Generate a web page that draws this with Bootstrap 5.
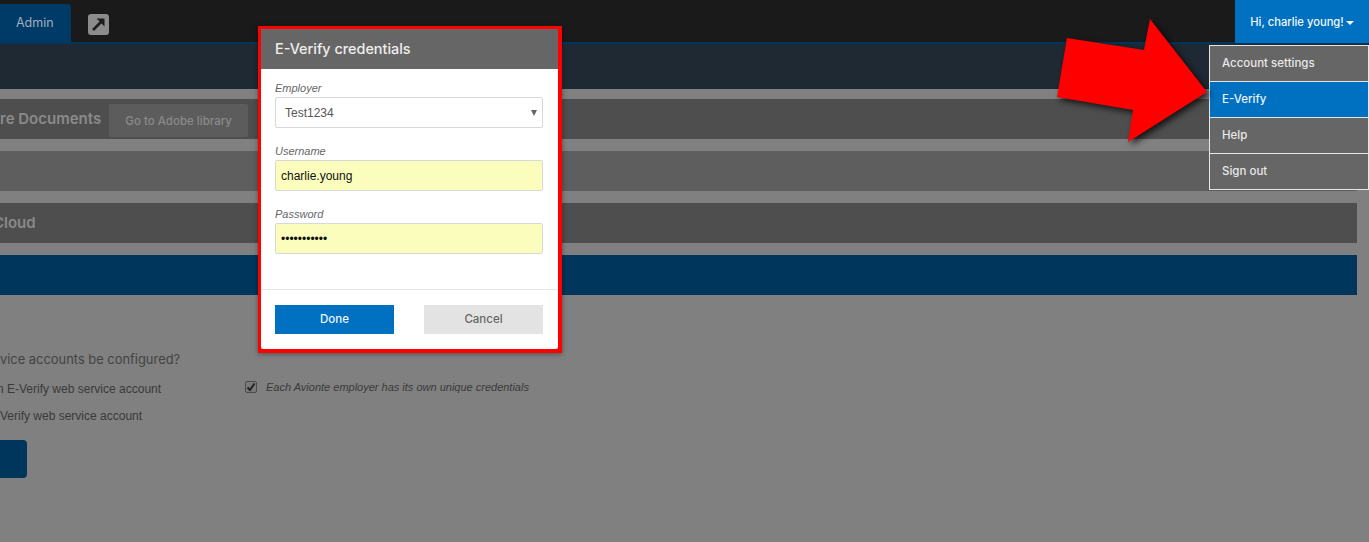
<!DOCTYPE html>
<html lang="en">
<head>
<meta charset="utf-8">
<title>E-Verify credentials</title>
<link rel="stylesheet" href="https://cdn.jsdelivr.net/npm/bootstrap@5.3.0/dist/css/bootstrap.min.css">
<style>
html,body{height:100%}
body{background:#808080;overflow:hidden;font-family:Inter,"Noto Sans",sans-serif;color:#3f3f3f;position:relative}
.topbar{height:44px;background:#1a1a1a;border-bottom:2px solid #00355c;padding-top:4px}
.tab-admin{width:71px;height:38px;background:#003a66;color:#9fb0bf;border-top-right-radius:4px;font-size:12.5px;padding-left:16px;padding-top:1px}
.ext-icon{width:21px;height:21px;margin-left:17px;margin-top:10px;background:#8c8c8c;border-radius:3px}
.subbar{height:45px;background:#1f2933}
.rows{padding:10px 12px 0 0;gap:12px}
.band{height:40px;font-weight:600;font-size:15px;color:#8a8a8a}
.band-dark{background:#4e4e4e}
.band-mid{background:#5e5e5e}
.band-blue{background:#00355c}
.doc-title{line-height:20px;margin-top:10px}
.cloud-title{margin-left:-7px}
.adobe-btn{width:139px;height:33px;margin-left:8px;margin-top:5px;padding-top:3px;background:#5c5c5c;color:#8a8a8a;border-radius:2px;font-size:11.5px;font-weight:500}
.config{padding-top:56px}
.q-text{font-size:12.9px;line-height:18px;color:#444;margin-bottom:11px}
.opt-text{font-family:"Liberation Sans",sans-serif;font-size:12px;line-height:18px;color:#3a3a3a}
.opt-first{margin-left:-3px;flex:0 0 248px}
.opt-second{margin-top:9px}
.chk-wrap{gap:9px;margin-top:-4px}
.chk{width:12px;height:12px;background:#7a7a7a;border:1px solid #4c4c4c;border-radius:2px}
.chk-label{font-family:"Liberation Sans",sans-serif;font-style:italic;font-size:11px;color:#3a3a3a}
.save-btn{width:27px;height:38px;margin-top:15px;background:#00355c;border-radius:0 4px 4px 0}
.user-btn{position:absolute;left:1235px;top:0;width:134px;height:43px;background:#0070c0;color:#f2f7fb;font-size:11.2px;font-weight:500;padding-top:2px}
.caret-down{border-top:4px solid #fff;border-left:4px solid transparent;border-right:4px solid transparent;margin-left:2px}
.user-menu{position:absolute;left:1209px;top:45px;width:160px;border:1px solid #e6e6e6}
.user-item{height:36px;padding:1px 0 0 12px;background:#666;color:#e8e8e8;font-size:11.5px;font-weight:500;border-bottom:1px solid #e6e6e6}
.user-item:last-child{border-bottom:0;height:35px}
.user-item.on{background:#0070c0;color:#e8f2fa}
.red-arrow{position:absolute;left:1050px;top:12px;filter:drop-shadow(3px 3px 3px rgba(0,0,0,.75))}
.cred-frame{position:absolute;left:258px;top:26px;width:304px;height:327px;border:3px solid #f00;border-right-width:4px;border-bottom-width:4px;box-shadow:0 1px 5px rgba(0,0,0,.4)}
.cred-box{height:100%;background:#fff;border-radius:0 0 3px 3px}
.cred-head{height:40px;background:#666;color:#eee;font-size:14.4px;font-weight:500;padding:0 0 1px 14px}
.cred-body{padding:12px 15px 0 14px;height:221px;border-bottom:1px solid #e5e5e5}
.cred-label{font-family:"Liberation Sans",sans-serif;font-style:italic;font-size:11px;line-height:14px;color:#666;margin:0 0 2px;display:block}
.cred-input{height:31px;width:268px;border:1px solid #d8d8d8;border-radius:2px;margin-bottom:16px;font-family:"Liberation Sans",sans-serif;font-size:12px;color:#111;background:#fbfdbd;padding:0 5px;display:flex;align-items:center}
.cred-select{background:#fff;color:#555;padding:0 5px 0 9px;justify-content:space-between}
.sel-caret{border-top:6px solid #666;border-left:3px solid transparent;border-right:3px solid transparent}
.cred-foot{padding:15px 15px 0 14px}
.cred-btn{width:119px;height:29px;font-size:11.5px;font-weight:500}
.cred-done{background:#0070c0;color:#eef6fc}
.cred-cancel{background:#e3e3e3;color:#666}
</style>
</head>
<body>
<nav class="topbar d-flex align-items-start">
  <div class="tab-admin d-flex align-items-center">Admin</div>
  <div class="ext-icon d-flex align-items-center justify-content-center">
    <svg width="17" height="17" viewBox="0 0 17 17"><path d="M3 14 L12 5" stroke="#1e1e1e" stroke-width="2.6" fill="none"/><path d="M6.5 2.5 H14.5 V10.5 Z" fill="#1e1e1e"/></svg>
  </div>
</nav>
<div class="subbar"></div>
<main class="rows d-flex flex-column">
  <div class="band band-dark d-flex align-items-start"><span class="doc-title">re Documents</span><div class="adobe-btn d-flex align-items-center justify-content-center">Go to Adobe library</div></div>
  <div class="band band-mid"></div>
  <div class="band band-dark d-flex align-items-center"><span class="cloud-title">Cloud</span></div>
  <div class="band band-blue"></div>
</main>
<section class="config">
  <div class="q-text">vice accounts be configured?</div>
  <div class="d-flex align-items-center">
    <div class="opt-text opt-first">n E-Verify web service account</div>
    <div class="chk-wrap d-flex align-items-center">
      <div class="chk d-flex align-items-center justify-content-center"><svg width="10" height="10" viewBox="0 0 10 10"><path d="M1.5 5.5 L4 8 L8.5 1.5" stroke="#222" stroke-width="2" fill="none"/></svg></div>
      <span class="chk-label">Each Avionte employer has its own unique credentials</span>
    </div>
  </div>
  <div class="opt-text opt-second">Verify web service account</div>
  <div class="save-btn"></div>
</section>

<div class="user-btn d-flex align-items-center justify-content-center">Hi, charlie young!<span class="caret-down"></span></div>
<div class="user-menu d-flex flex-column">
  <div class="user-item d-flex align-items-center">Account settings</div>
  <div class="user-item on d-flex align-items-center">E-Verify</div>
  <div class="user-item d-flex align-items-center">Help</div>
  <div class="user-item d-flex align-items-center">Sign out</div>
</div>
<svg class="red-arrow" width="170" height="140" viewBox="1050 12 170 140"><polygon points="1207,92 1150,19 1144,50 1067,38 1057,97 1133,110 1128,142" fill="#f00"/></svg>

<div class="cred-frame">
  <div class="cred-box">
    <div class="cred-head d-flex align-items-center">E-Verify credentials</div>
    <div class="cred-body">
      <span class="cred-label">Employer</span>
      <div class="cred-input cred-select"><span>Test1234</span><span class="sel-caret"></span></div>
      <span class="cred-label">Username</span>
      <div class="cred-input">charlie.young</div>
      <span class="cred-label">Password</span>
      <div class="cred-input">•••••••••••</div>
    </div>
    <div class="cred-foot d-flex justify-content-between">
      <div class="cred-btn cred-done d-flex align-items-center justify-content-center">Done</div>
      <div class="cred-btn cred-cancel d-flex align-items-center justify-content-center">Cancel</div>
    </div>
  </div>
</div>
<script src="https://cdn.jsdelivr.net/npm/bootstrap@5.3.0/dist/js/bootstrap.bundle.min.js"></script>
</body>
</html>
